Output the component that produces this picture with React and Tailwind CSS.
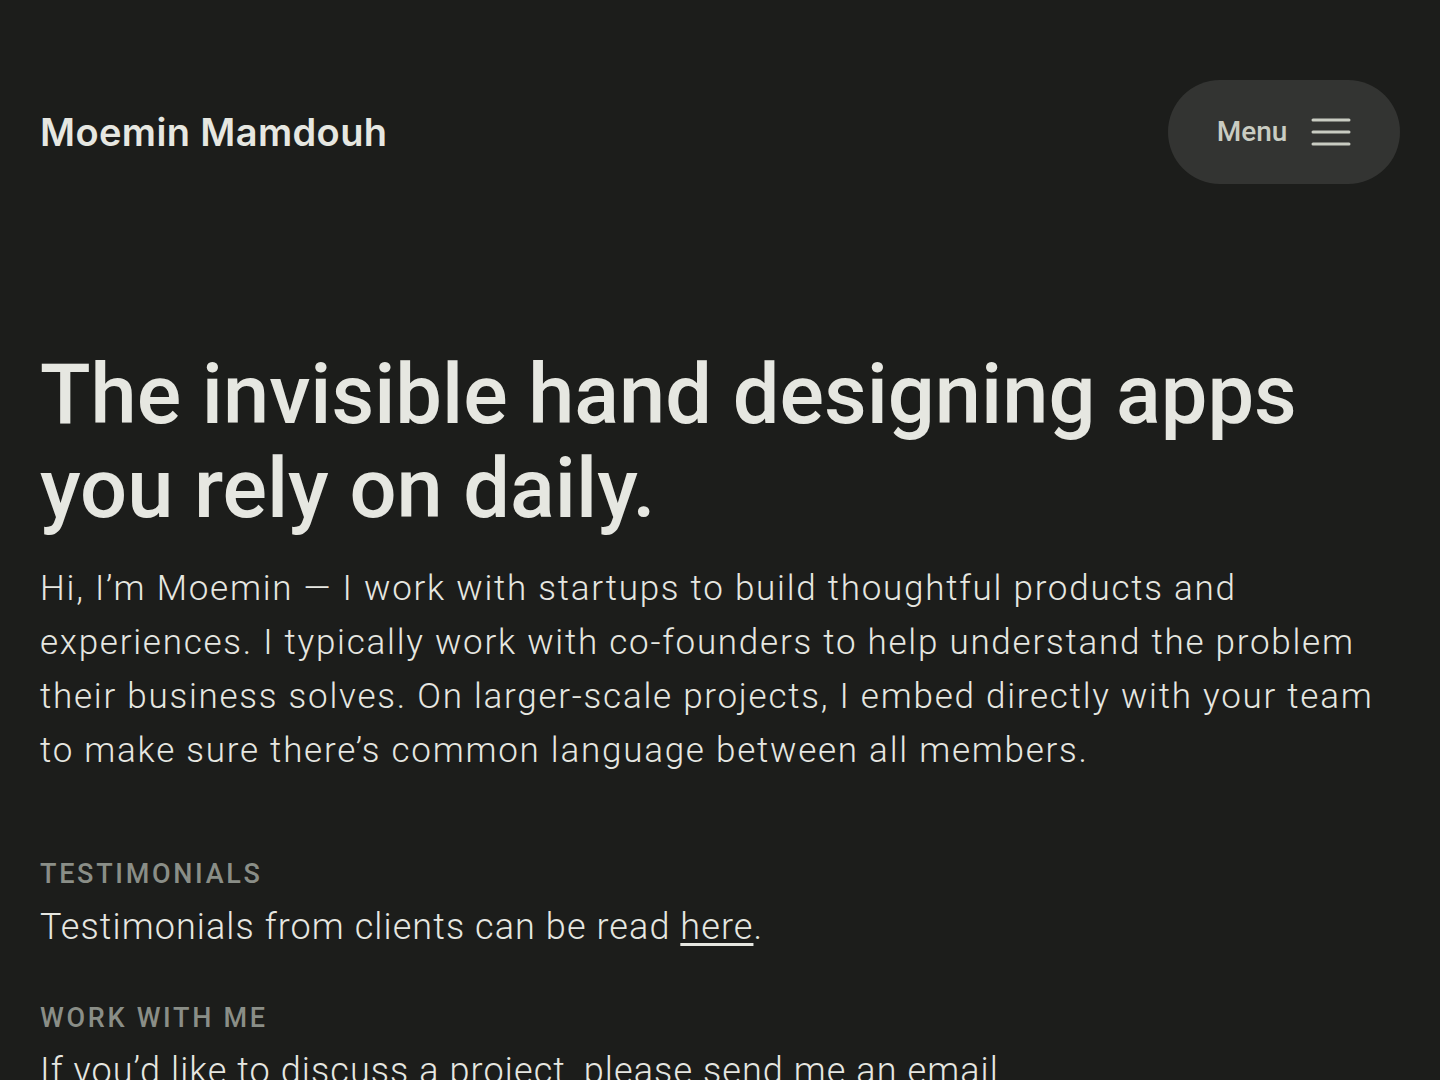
import React from 'react';

const Header = () => (
  <header className="flex items-center justify-between pt-20 px-10">
    <a href="#" className="font-['Inter',sans-serif] text-[38px] font-semibold tracking-[0.01em] text-[#e6e7e1] leading-none">
      Moemin Mamdouh
    </a>
    <button className="flex items-center gap-6 h-[104px] w-[232px] justify-center rounded-full bg-[#333432]">
      <span className="font-['Roboto',sans-serif] text-[28px] font-medium text-[#c9ccc2]">Menu</span>
      <svg width="40" height="30" viewBox="0 0 40 30" fill="none">
        <line x1="2" y1="3" x2="38" y2="3" stroke="#c9ccc2" strokeWidth="3" strokeLinecap="round" />
        <line x1="2" y1="15" x2="38" y2="15" stroke="#c9ccc2" strokeWidth="3" strokeLinecap="round" />
        <line x1="2" y1="27" x2="38" y2="27" stroke="#c9ccc2" strokeWidth="3" strokeLinecap="round" />
      </svg>
    </button>
  </header>
);

const Section = ({ label, children }) => (
  <div>
    <h3 className="text-[27px] font-medium tracking-[0.1em] text-[#8a8e87] uppercase leading-tight">{label}</h3>
    <p className="mt-2 text-[36px] font-light tracking-[0.03em] text-[#e6e7e1] leading-[1.5]">{children}</p>
  </div>
);

export default function App() {
  return (
    <div className="h-[1080px] overflow-hidden bg-[#1c1d1b] font-['Roboto',sans-serif]">
      <Header />
      <main className="px-10 pt-[164px]">
        <h1 className="text-[83px] font-medium leading-[94px] text-[#e6e7e1] max-w-[1300px]">
          The invisible hand designing apps you rely on daily.
        </h1>
        <p className="mt-[26px] text-[35px] font-light tracking-[0.05em] leading-[54px] text-[#e6e7e1]">
          Hi, I’m Moemin — I work with startups to build thoughtful products and experiences. I typically work with co-founders to help understand the problem their business solves. On larger-scale projects, I embed directly with your team to make sure there’s common language between all members.
        </p>
        <div className="mt-20 flex flex-col gap-12">
          <Section label="Testimonials">
            Testimonials from clients can be read <a href="#" className="underline underline-offset-4">here</a>.
          </Section>
          <Section label="Work with me">
            If you’d like to discuss a project, please send me an email.
          </Section>
        </div>
      </main>
    </div>
  );
}
